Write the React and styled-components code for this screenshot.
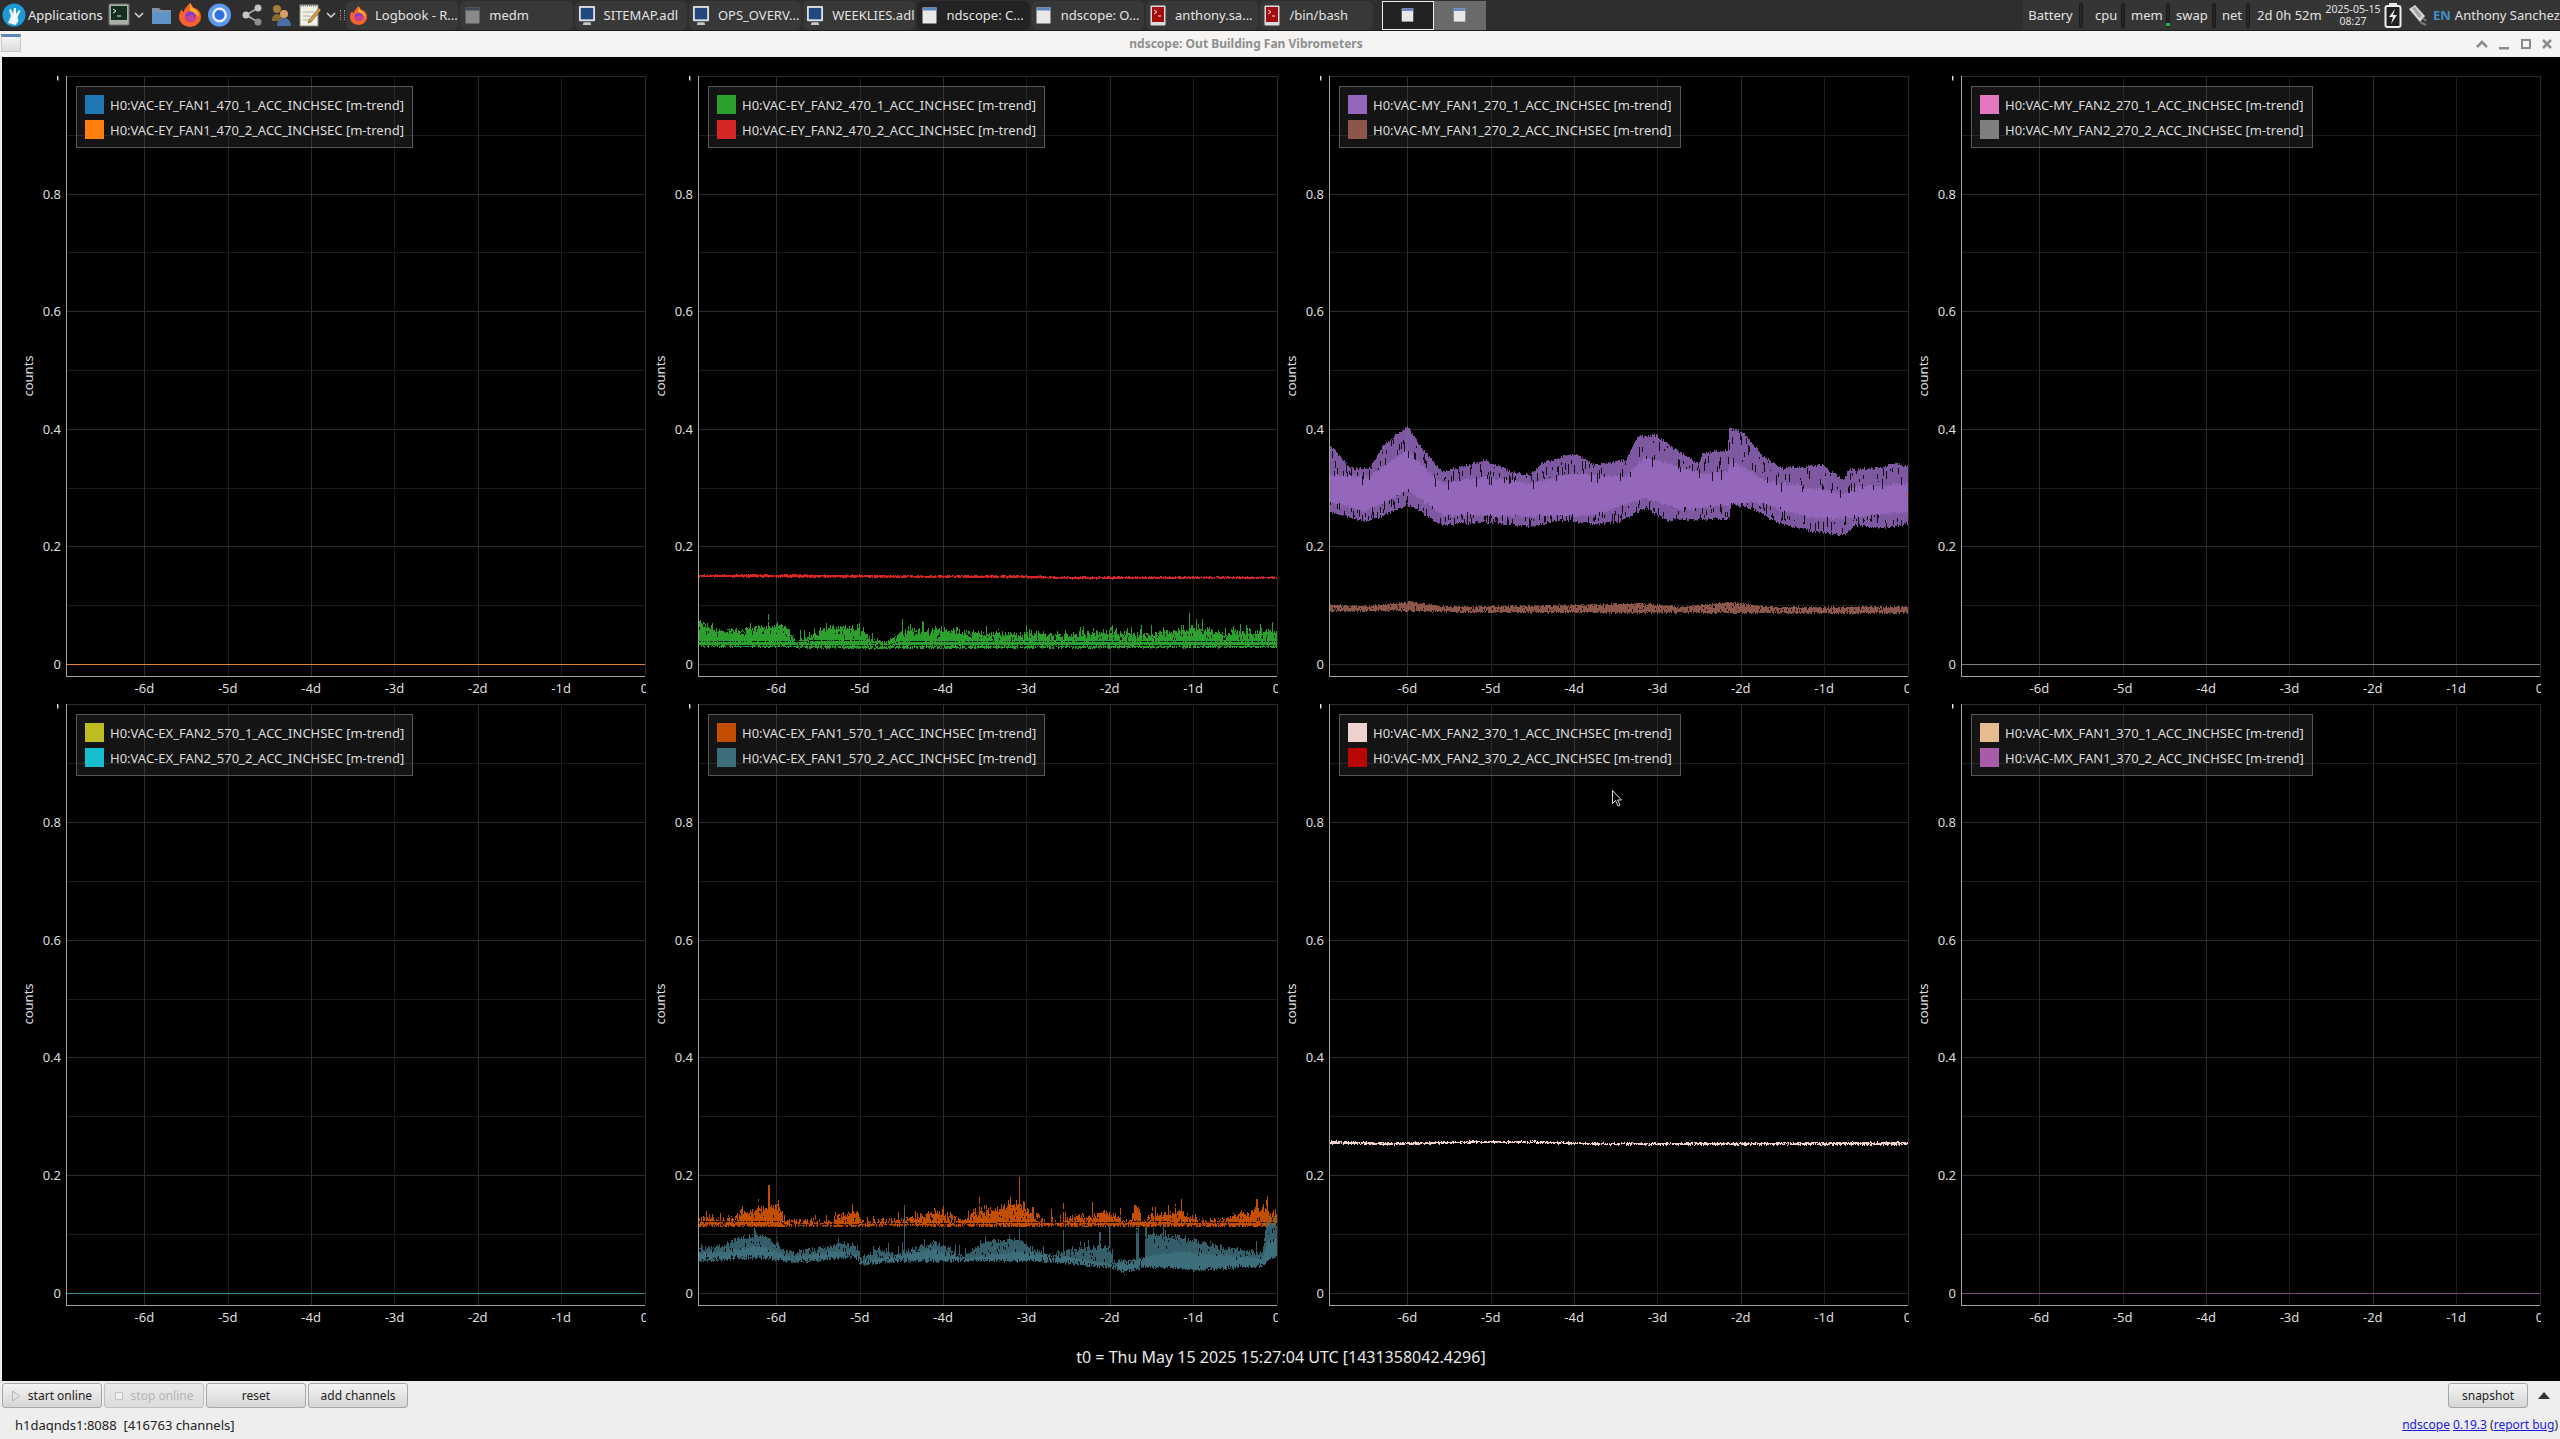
import { useMemo } from 'react'
import styled, { createGlobalStyle } from 'styled-components'

const GlobalStyle = createGlobalStyle`
	html, body {
		margin: 0;
		background: #eeeeee;
		font-family: 'Noto Sans', sans-serif;
	}
`

// plot geometry, local to one grid cell
const AXIS_X = 64
const PLOT_W = 579
const PLOT_TOP = 4
const ZERO_TO_BOTTOM = 12
const DAY_W = 83.35
const DAY0_X = AXIS_X + 78.4 + 6 * DAY_W

function rngFor(seed) {
	let a = seed
	return () => {
		a = (a + 0x6d2b79f5) | 0
		let t = Math.imul(a ^ (a >>> 15), 1 | a)
		t = (t + Math.imul(t ^ (t >>> 7), 61 | t)) ^ t
		return ((t ^ (t >>> 14)) >>> 0) / 4294967296
	}
}

// traces were read off zoomed crops: x is squeezed 2.613, y is 3x
const fromZoom = (pts, x0, yOff) =>
	pts.map(([x, y]) => [AXIS_X + (x - x0) / 2.613, yOff + y / 3])

function lerp(pts, x) {
	if (x <= pts[0][0]) return pts[0][1]
	for (let i = 1; i < pts.length; i++) {
		if (x <= pts[i][0]) {
			const [x0, y0] = pts[i - 1]
			const [x1, y1] = pts[i]
			return y0 + ((y1 - y0) * (x - x0)) / (x1 - x0)
		}
	}
	return pts[pts.length - 1][1]
}

function buildBand(trace) {
	const rng = rngFor(trace.seed)
	const { upper, lower, coreUpper, coreLower, rails = [], spikes = [] } = trace
	const { jitter = 1.5, topJitter = jitter, gapRate = 0.3, gapLen = 8, spikeRate = 0 } = trace
	let outer = ''
	let core = ''
	let gaps = ''
	for (let c = 0; c < PLOT_W; c++) {
		const x = AXIS_X + c
		let hi = lerp(upper, x) + (rng() - 0.5) * topJitter * 2
		const lo = lerp(lower, x) + (rng() - 0.5) * jitter * 2
		if (rng() < spikeRate) hi -= rng() * rng() * 14
		spikes.forEach(([sx, sy]) => {
			if (Math.abs(sx - x) < 0.8) hi = Math.min(hi, sy)
		})
		outer += `M${x + 0.5} ${hi.toFixed(1)}V${lo.toFixed(1)}`
		let cHi = lo
		let cLo = lo
		if (coreUpper) {
			cHi = lerp(coreUpper, x) + (rng() - 0.5) * jitter * 2
			cLo = coreLower ? lerp(coreLower, x) + (rng() - 0.5) * jitter * 2 : lo
			core += `M${x + 0.5} ${cHi.toFixed(1)}V${cLo.toFixed(1)}`
		}
		if (rng() < gapRate) {
			const y = hi + rng() * Math.max(cHi - hi, 1)
			gaps += `M${x + 0.5} ${y.toFixed(1)}v${(1 + rng() * gapLen).toFixed(1)}`
		}
		if (coreLower && rng() < gapRate) {
			const y = cLo + rng() * Math.max(lo - cLo - 2, 1) - 2
			gaps += `M${x + 0.5} ${y.toFixed(1)}v${(1 + rng() * gapLen).toFixed(1)}`
		}
		rails.forEach((rail) => {
			if (rng() < 0.65) gaps += `M${x + 0.5} ${lerp(rail, x).toFixed(1)}v1`
		})
	}
	return { outer, core, gaps }
}

const P = (pts) => fromZoom(pts, 25, 328)
const G = (pts) => fromZoom(pts, 46, 468)
const E = (pts) => fromZoom(pts, 46, 440)

const purple = {
	color: '#9467bd',
	seed: 11,
	jitter: 1.6,
	gapRate: 0.3,
	gapLen: 9,
	upper: P([[25, 135], [55, 170], [80, 205], [130, 205], [170, 130], [230, 80], [270, 150], [320, 215], [370, 200], [430, 180], [500, 215], [550, 225], [580, 190], [665, 160], [720, 195], [800, 180], [830, 110], [880, 105], [915, 140], [990, 190], [1000, 160], [1065, 150], [1070, 85], [1110, 100], [1160, 170], [1210, 205], [1310, 195], [1370, 240], [1380, 210], [1450, 205], [1510, 190], [1536, 200]]),
	lower: P([[25, 335], [120, 365], [170, 345], [230, 315], [320, 375], [430, 365], [550, 380], [620, 360], [720, 372], [780, 365], [850, 325], [905, 360], [1070, 355], [1075, 315], [1130, 325], [1200, 370], [1290, 395], [1370, 405], [1400, 375], [1480, 385], [1536, 370]]),
	coreUpper: P([[25, 225], [130, 230], [190, 180], [230, 150], [270, 200], [320, 250], [430, 230], [550, 250], [665, 220], [800, 230], [850, 170], [1000, 220], [1065, 215], [1075, 180], [1160, 240], [1370, 280], [1400, 260], [1536, 250]]),
	coreLower: P([[25, 305], [120, 335], [170, 310], [230, 270], [320, 345], [550, 350], [720, 345], [850, 295], [950, 330], [1070, 315], [1130, 305], [1290, 355], [1370, 355], [1536, 335]]),
}

const brown = {
	color: '#8c564b',
	seed: 12,
	jitter: 1,
	gapRate: 0.3,
	gapLen: 2,
	upper: P([[25, 615], [130, 618], [230, 605], [330, 620], [600, 617], [830, 610], [950, 620], [1070, 607], [1200, 622], [1536, 620]]),
	lower: P([[25, 635], [200, 632], [350, 637], [1536, 640]]),
}

const green = {
	color: '#2ca02c',
	seed: 21,
	jitter: 1,
	topJitter: 3,
	gapRate: 0.25,
	gapLen: 3,
	spikeRate: 0.3,
	solid: true,
	upper: G([[46, 245], [100, 275], [200, 265], [270, 255], [300, 305], [355, 285], [380, 265], [460, 265], [500, 300], [540, 310], [570, 280], [690, 268], [760, 280], [1000, 288], [1130, 278], [1200, 285], [1300, 272], [1360, 262], [1420, 282], [1560, 272]]),
	lower: G([[46, 320], [270, 320], [300, 323], [500, 326], [560, 325], [700, 325], [1560, 322]]),
	coreUpper: G([[46, 275], [270, 280], [300, 305], [460, 288], [510, 318], [570, 290], [1000, 295], [1560, 290]]),
	coreLower: G([[46, 320], [1560, 322]]),
	rails: [G([[46, 302], [270, 302], [480, 300], [530, 318], [570, 304], [1560, 304]]), G([[46, 314], [1560, 315]])],
}

const red = {
	color: '#d62728',
	seed: 22,
	jitter: 0.6,
	gapRate: 0.12,
	gapLen: 1,
	upper: G([[46, 105], [220, 103], [600, 106], [900, 106], [1000, 110], [1560, 110]]),
	lower: G([[46, 111], [600, 113], [900, 114], [1000, 117], [1560, 116]]),
}

const orange = {
	color: '#c44e00',
	seed: 31,
	jitter: 0.8,
	topJitter: 3.5,
	gapRate: 0.35,
	gapLen: 3,
	spikeRate: 0.3,
	solid: true,
	upper: E([[46, 238], [140, 240], [150, 218], [260, 198], [270, 242], [400, 246], [410, 230], [460, 212], [470, 246], [590, 242], [610, 230], [670, 212], [740, 246], [760, 226], [880, 190], [930, 230], [950, 246], [1000, 250], [1010, 235], [1130, 222], [1160, 246], [1180, 250], [1185, 205], [1200, 205], [1205, 255], [1220, 230], [1300, 216], [1380, 246], [1440, 230], [1530, 206], [1560, 228]]),
	lower: E([[46, 259], [1560, 259]]),
	coreUpper: E([[46, 245], [140, 245], [160, 228], [260, 228], [270, 247], [400, 248], [460, 238], [470, 248], [880, 238], [950, 248], [1560, 242]]),
	coreLower: E([[46, 259], [1560, 259]]),
	rails: [E([[150, 244], [260, 244], [270, 252], [1220, 244], [1560, 246]])],
	spikes: E([[230, 135], [885, 110], [780, 170], [1000, 188], [584, 195], [1075, 185], [1190, 198], [1505, 178]]),
}

const teal = {
	color: '#3c6e7c',
	seed: 32,
	jitter: 1.4,
	topJitter: 2.5,
	gapRate: 0.3,
	gapLen: 3,
	spikeRate: 0.15,
	upper: E([[46, 325], [100, 320], [150, 295], [210, 285], [290, 340], [360, 325], [430, 310], [465, 330], [470, 360], [510, 330], [560, 345], [660, 305], [740, 350], [800, 305], [880, 300], [950, 345], [1050, 325], [1120, 320], [1130, 365], [1190, 360], [1215, 355], [1220, 280], [1300, 290], [1400, 320], [1520, 340], [1530, 250], [1560, 250]]),
	lower: E([[46, 365], [200, 355], [300, 368], [460, 350], [470, 376], [560, 365], [700, 365], [900, 360], [1000, 370], [1130, 385], [1160, 400], [1200, 385], [1300, 380], [1340, 392], [1520, 380], [1535, 350], [1560, 350]]),
	coreUpper: E([[46, 340], [210, 320], [290, 352], [430, 330], [470, 365], [660, 328], [740, 355], [880, 335], [1000, 350], [1130, 375], [1220, 350], [1300, 335], [1520, 355], [1535, 300], [1560, 300]]),
	coreLower: E([[46, 360], [200, 350], [300, 365], [460, 345], [470, 372], [560, 362], [1000, 365], [1130, 382], [1160, 396], [1200, 382], [1340, 388], [1520, 376], [1560, 340]]),
	spikes: E([[584, 195], [1000, 270], [1190, 265], [1195, 265], [1095, 275], [1120, 255], [885, 268], [1215, 260]]),
}

const pink = {
	color: '#f3d1cd',
	seed: 41,
	jitter: 0.8,
	gapRate: 0.15,
	gapLen: 1,
	upper: [[64, 441], [130, 442.5], [210, 441], [270, 441], [330, 443], [640, 442], [1000, 441], [1500, 443]],
	lower: [[64, 444], [130, 445], [210, 443], [270, 443], [330, 445], [640, 445], [1000, 444], [1500, 445.5]],
}

const PLOTS = [
	{ ref: 'EY_FAN1_470', legend: ['#1f77b4', '#ff7f0e'], flat: '#e4812a' },
	{ ref: 'EY_FAN2_470', legend: ['#2ca02c', '#d62728'], bands: [green, red] },
	{ ref: 'MY_FAN1_270', legend: ['#9467bd', '#8c564b'], bands: [purple, brown], dot: true },
	{ ref: 'MY_FAN2_270', legend: ['#e377c2', '#7f7f7f'], flat: '#7f7f7f' },
	{ ref: 'EX_FAN2_570', legend: ['#bcbd22', '#17becf'], flat: '#2f8f96' },
	{ ref: 'EX_FAN1_570', legend: ['#c44e00', '#3c6e7c'], bands: [orange, teal] },
	{ ref: 'MX_FAN2_370', legend: ['#edd2cf', '#b80707'], bands: [pink] },
	{ ref: 'MX_FAN1_370', legend: ['#e6bb8f', '#a65ca6'], flat: '#7a4a7a' },
]

function Band({ trace }) {
	const { outer, core, gaps } = useMemo(() => buildBand(trace), [trace])
	return (
		<g shapeRendering='crispEdges'>
			<path d={outer} stroke={trace.color} strokeOpacity={trace.coreUpper && !trace.solid ? 0.85 : 1} />
			{core && <path d={core} stroke={trace.color} />}
			<path d={gaps} stroke='#000' strokeOpacity={0.85} />
		</g>
	)
}

function Plot({ ref: channel, legend, flat, bands, dot, zero }) {
	const valueY = (v) => zero - v * (zero - PLOT_TOP)
	const bottom = zero + ZERO_TO_BOTTOM
	const right = AXIS_X + PLOT_W
	const days = [6, 5, 4, 3, 2, 1, 0]
	const tenths = [1, 2, 3, 4, 5, 6, 7, 8, 9, 10]
	return (
		<Cell>
			<PlotSvg width='646' height='628'>
				{tenths.map((t) => (
					<GridLine
						key={t}
						$strong={t % 2 === 0}
						x1={AXIS_X}
						x2={right}
						y1={Math.round(valueY(t / 10)) + 0.5}
						y2={Math.round(valueY(t / 10)) + 0.5}
					/>
				))}
				<GridLine $strong x1={AXIS_X} x2={right} y1={zero + 0.5} y2={zero + 0.5} />
				{days.map((d) => (
					<GridLine
						key={d}
						$strong={d % 2 === 0}
						x1={Math.round(DAY0_X - d * DAY_W) + 0.5}
						x2={Math.round(DAY0_X - d * DAY_W) + 0.5}
						y1={PLOT_TOP}
						y2={bottom}
					/>
				))}
				{flat && <line x1={AXIS_X} x2={right} y1={zero + 0.5} y2={zero + 0.5} stroke={flat} />}
				{bands && bands.map((b) => <Band key={b.seed} trace={b} />)}
				{dot && <rect x={right - 2} y={422} width='2' height='1' fill='#e03030' />}
				<AxisLine x1={AXIS_X + 0.5} x2={AXIS_X + 0.5} y1={PLOT_TOP} y2={bottom + 1} />
				<AxisLine x1={AXIS_X} x2={right} y1={bottom + 0.5} y2={bottom + 0.5} />
				<rect x='55' y={PLOT_TOP} width='1.4' height='4.5' fill='#e6e6e6' />
				{[0, 0.2, 0.4, 0.6, 0.8].map((v) => (
					<text key={v} x='59' y={valueY(v) + 5} textAnchor='end'>
						{v}
					</text>
				))}
				<text transform={`translate(31 304) rotate(-90)`} textAnchor='middle'>
					counts
				</text>
				<svg x='0' y={bottom} width={right + 1} height='24'>
					{days.map((d) => (
						<text key={d} x={DAY0_X - d * DAY_W} y='17' textAnchor='middle'>
							{d === 0 ? '0' : `-${d}d`}
						</text>
					))}
				</svg>
			</PlotSvg>
			<Legend>
				{legend.map((color, i) => (
					<LegendRow key={color}>
						<Swatch $color={color} />
						H0:VAC-{channel}_{i + 1}_ACC_INCHSEC [m-trend]
					</LegendRow>
				))}
			</Legend>
		</Cell>
	)
}

/* ---- small drawn icons ---- */

function Logo() {
	return (
		<svg width='24' height='24' viewBox='0 0 24 24'>
			<circle cx='12' cy='12' r='11.5' fill='#1d9ad6' />
			<path d='M6 20 9 13 7 7l2-1 2 5 1-6 2 0 0 6 3-4 1.500 1-3 6 1 4-3 4z' fill='#f2f6f8' />
		</svg>
	)
}

function TerminalIcon() {
	return (
		<svg width='22' height='24' viewBox='0 0 22 24'>
			<rect x='1' y='1' width='20' height='21' rx='1' fill='#aab0a8' stroke='#6d716b' />
			<rect x='3' y='3' width='16' height='14' fill='#16301f' />
			<path d='M5 6l3 2-3 2M9 13h4' stroke='#e8f0e8' fill='none' />
		</svg>
	)
}

function FolderIcon() {
	return (
		<svg width='21' height='20' viewBox='0 0 21 20'>
			<path d='M1 3h7l2 2h10v14H1z' fill='#7e93a8' />
			<rect x='1' y='7' width='19' height='12' fill='#5f94c8' />
		</svg>
	)
}

function FirefoxIcon({ size = 22 }) {
	return (
		<svg width={size} height={size + 2} viewBox='0 0 24 26'>
			<path d='M12 0c2 2 3 4 4 5 5 1 8 5 8 10 0 6-5 11-12 11S0 21 0 15c0-3 1-6 3-8 0 1 1 2 2 3 1-4 4-7 7-10z' fill='#f9622a' />
			<path d='M12 0c2 3 1 5 4 6 3 2 6 5 6 9-3-4-7-4-10-4z' fill='#ffb51f' />
			<circle cx='12.500' cy='15' r='6' fill='#7c3bd0' />
			<path d='M6 14c3 1 7 0 8-2 3 1 4 4 3 7-3 3-9 3-11-5z' fill='#e1457c' opacity='.7' />
		</svg>
	)
}

function ChromiumIcon() {
	return (
		<svg width='23' height='24' viewBox='0 0 24 24'>
			<circle cx='12' cy='12' r='12' fill='#5f97f0' />
			<circle cx='12' cy='12' r='6.500' fill='#2f6fe0' stroke='#e9eff9' strokeWidth='2.500' />
		</svg>
	)
}

function ShareIcon() {
	return (
		<svg width='25' height='22' viewBox='-3 0 25 22'>
			<path d='M17 4 5 11l12 7' stroke='#b5b5b5' strokeWidth='1.500' fill='none' />
			<circle cx='17' cy='4' r='3.500' fill='#c4c4c4' />
			<circle cx='5' cy='11' r='3.500' fill='#c4c4c4' />
			<circle cx='17' cy='18' r='3.500' fill='#8e8e8e' />
		</svg>
	)
}

function UsersIcon() {
	return (
		<svg width='22' height='24' viewBox='0 0 22 24'>
			<circle cx='7' cy='6' r='4' fill='#a67c3c' />
			<path d='M2 18c0-5 2-7 5-7s5 2 5 7z' fill='#8a6a30' />
			<circle cx='14' cy='11' r='4' fill='#d9a066' />
			<path d='M7 23c0-5 3-8 7-8s7 3 7 8z' fill='#4a6fa5' />
		</svg>
	)
}

function NotepadIcon() {
	return (
		<svg width='23' height='24' viewBox='0 0 23 24'>
			<rect x='1' y='2' width='18' height='21' fill='#f2f0e4' stroke='#8c8c80' />
			<path d='M2 2.500h16' stroke='#777' strokeWidth='2' strokeDasharray='1 1' />
			<path d='M4 9h11M4 13h8M4 17h6' stroke='#b0b0a8' />
			<path d='M20 5 10 17l-1 3 3-1L22 7z' fill='#d8a040' stroke='#5a4520' strokeWidth='.6' />
		</svg>
	)
}

function WindowIcon({ dim, small }) {
	return (
		<svg width={small ? 13 : 15} height={small ? 14 : 17} viewBox='0 0 15 17'>
			<rect x='.5' y='.5' width='14' height='16' fill={dim ? '#8a8a8a' : '#e8e8e8'} />
			<rect x='.5' y='.5' width='14' height='3' fill={dim ? '#3e4a58' : '#5c86bb'} />
		</svg>
	)
}

function MonitorIcon() {
	return (
		<svg width='18' height='21' viewBox='0 0 19 22'>
			<rect x='1' y='1' width='17' height='16' rx='1' fill='#d8dce0' />
			<rect x='3' y='3' width='13' height='12' fill='#23487f' />
			<path d='M6 18h7l1 3H5z' fill='#c4c8cc' />
		</svg>
	)
}

function RedTerminalIcon() {
	return (
		<svg width='16' height='21' viewBox='0 0 16 21'>
			<rect x='.5' y='.5' width='15' height='20' rx='1' fill='#dcdcdc' />
			<rect x='2' y='2' width='12' height='15' fill='#a30d0d' />
			<path d='M4 5l3 2-3 2M8 11h3' stroke='#f3e2e2' fill='none' />
		</svg>
	)
}

const Chevron = () => (
	<ChevronSvg width='10' height='7' viewBox='0 0 10 7'>
		<path d='M1 1l4 4 4-4' stroke='#d8d8d8' strokeWidth='1.500' fill='none' />
	</ChevronSvg>
)

const TASKS = [
	{ title: 'Logbook - R...', icon: <FirefoxIcon size={17} /> },
	{ title: 'medm', icon: <WindowIcon dim /> },
	{ title: 'SITEMAP.adl', icon: <MonitorIcon /> },
	{ title: 'OPS_OVERV...', icon: <MonitorIcon /> },
	{ title: 'WEEKLIES.adl', icon: <MonitorIcon /> },
	{ title: 'ndscope: C...', icon: <WindowIcon />, active: true },
	{ title: 'ndscope: O...', icon: <WindowIcon /> },
	{ title: 'anthony.sa...', icon: <RedTerminalIcon /> },
	{ title: '/bin/bash', icon: <RedTerminalIcon /> },
]

const METERS = [
	{ label: 'Battery', width: 47 },
	{ label: 'cpu', width: 21, lead: 6 },
	{ label: 'mem', width: 30 },
	{ label: 'swap', width: 31 },
	{ label: 'net', width: 19 },
]

function App() {
	return (
		<Screen>
			<GlobalStyle />
			<TopBar>
				<Launchers>
					<Logo />
					<AppsLabel>Applications</AppsLabel>
					<TerminalIcon />
					<Chevron />
					<FolderIcon />
					<FirefoxIcon />
					<ChromiumIcon />
					<ShareIcon />
					<UsersIcon />
					<NotepadIcon />
					<Chevron />
					<Grip />
				</Launchers>
				<Tasks>
					{TASKS.map((t) => (
						<Task key={t.title} $active={t.active}>
							<TaskIcon>{t.icon}</TaskIcon>
							{t.title}
						</Task>
					))}
				</Tasks>
				<Pager>
					<Desk $current>
						<WindowIcon small />
					</Desk>
					<Desk>
						<WindowIcon small />
					</Desk>
				</Pager>
				<Spacer />
				<Tray>
					{METERS.map((m) => (
						<MeterGroup key={m.label}>
							<MeterLabel $width={m.width} $lead={m.lead}>
								{m.label}
							</MeterLabel>
							<Meter $used={m.label === 'mem'} />
						</MeterGroup>
					))}
					<Uptime>2d 0h 52m</Uptime>
					<Clock>
						<span>2025-05-15</span>
						<span>08:27</span>
					</Clock>
					<svg width='18' height='25' viewBox='0 0 18 25'>
						<rect x='5' y='0' width='8' height='3' fill='#e8e8e8' />
						<rect x='1.500' y='3' width='15' height='21' rx='2' fill='#222' stroke='#eee' strokeWidth='2' />
						<path d='M11 6 5 14h4l-2 7 6-9H9z' fill='#eee' />
					</svg>
					<PlugIcon width='19' height='22' viewBox='0 0 19 22'>
						<path d='M1 5l6-4 10 11-5 6z' fill='#d8d8d8' />
						<path d='M12 18l6 3M15 14l3 3' stroke='#777' strokeWidth='2' />
						<path d='M4 4l3-1 7 9-3 2z' fill='#a4a4a4' />
					</PlugIcon>
					<Lang>EN</Lang>
					<UserName>Anthony Sanchez</UserName>
				</Tray>
			</TopBar>

			<TitleBar>
				<AppIcon />
				<WindowTitle>ndscope: Out Building Fan Vibrometers</WindowTitle>
				<WindowButtons>
					<svg width='14' height='10' viewBox='0 0 14 10'>
						<path d='M2 8l5-5 5 5' stroke='#8c8c8c' strokeWidth='2.500' fill='none' />
					</svg>
					<svg width='12' height='12' viewBox='0 0 12 12'>
						<rect x='1' y='9' width='10' height='2.500' fill='#8c8c8c' />
					</svg>
					<svg width='12' height='12' viewBox='0 0 12 12'>
						<rect x='2' y='2' width='8' height='8' stroke='#8c8c8c' strokeWidth='2' fill='none' />
					</svg>
					<svg width='12' height='12' viewBox='0 0 12 12'>
						<path d='M2 2l8 8M10 2l-8 8' stroke='#8c8c8c' strokeWidth='2.500' />
					</svg>
				</WindowButtons>
			</TitleBar>

			<Scope>
				<PlotGrid>
					{PLOTS.map((p, i) => (
						<Plot key={p.ref} {...p} zero={i < 4 ? 592 : 593} />
					))}
				</PlotGrid>
				<TimeLabel>t0 = Thu May 15 2025 15:27:04 UTC [1431358042.4296]</TimeLabel>
				<Cursor width='11' height='17' viewBox='0 0 11 17'>
					<path d='M.5.5v13l3-3 2.500 5.500 2-1-2.500-5h4z' fill='#000' stroke='#ddd' />
				</Cursor>
			</Scope>

			<ControlBar>
				<PushButton>
					<svg width='8' height='12' viewBox='0 0 8 12'>
						<path d='M.5 1l7 5-7 5z' fill='#e4e4e4' stroke='#b4b4b4' />
					</svg>
					start online
				</PushButton>
				<PushButton disabled>
					<svg width='8' height='8' viewBox='0 0 8 8'>
						<rect x='.5' y='.5' width='7' height='7' fill='#eee' stroke='#c4c4c4' />
					</svg>
					stop online
				</PushButton>
				<PushButton>reset</PushButton>
				<PushButton>add channels</PushButton>
				<Spacer />
				<SnapshotButton>snapshot</SnapshotButton>
				<Collapse />
			</ControlBar>

			<StatusBar>
				<span>h1daqnds1:8088&nbsp;&nbsp;[416763 channels]</span>
				<StatusLinks>
					<StatusLink>ndscope</StatusLink> <StatusLink>0.19.3</StatusLink> (<StatusLink>report bug</StatusLink>)
				</StatusLinks>
			</StatusBar>
		</Screen>
	)
}

export default App

const Screen = styled.div`
	width: 2560px;
	height: 1439px;
	display: flex;
	flex-direction: column;
	overflow: hidden;
	background: #eeeeee;
`

const TopBar = styled.header`
	height: 30px;
	flex: none;
	display: flex;
	align-items: center;
	background: #2e2e2e;
	border-bottom: 1px solid #1c1c1c;
	color: #e2e2e2;
	font-size: 13px;
`

const Launchers = styled.div`
	width: 346px;
	flex: none;
	box-sizing: border-box;
	padding-left: 2px;
	display: flex;
	align-items: center;
	gap: 7px;
`

const ChevronSvg = styled.svg`
	margin-left: -3px;
`

const AppsLabel = styled.span`
	width: 74px;
	margin: 0 -1px 0 -5px;
	color: #e8e8e8;
`

const Grip = styled.span`
	width: 3px;
	height: 10px;
	margin-left: -3px;
	border-left: 1px dotted #999;
	border-right: 1px dotted #999;
`

const Tasks = styled.div`
	display: flex;
	gap: 2px;
`

const Task = styled.div`
	width: 112.3px;
	height: 29px;
	box-sizing: border-box;
	padding-left: 3px;
	display: flex;
	align-items: center;
	gap: 8px;
	border-radius: 6px;
	background: ${({ $active }) => ($active ? '#232323' : '#383838')};
	white-space: nowrap;
	overflow: hidden;
`

const TaskIcon = styled.span`
	width: 18px;
	flex: none;
	display: flex;
	justify-content: center;
`

const Pager = styled.div`
	margin-left: 9px;
	display: flex;
	height: 29px;
	box-sizing: border-box;
`

const Desk = styled.div`
	width: 52px;
	display: flex;
	align-items: center;
	justify-content: center;
	box-sizing: border-box;
	background: ${({ $current }) => ($current ? '#222222' : '#6a6a6a')};
	border: ${({ $current }) => ($current ? '1px solid #eeeeee' : 'none')};
`

const Spacer = styled.div`
	flex: 1;
`

const Tray = styled.div`
	width: 537px;
	height: 30px;
	box-sizing: border-box;
	padding-left: 4px;
	display: flex;
	align-items: center;
	background: #353535;
	white-space: nowrap;

	svg {
		flex: none;
	}
`

const MeterGroup = styled.div`
	display: flex;
	align-items: center;
`

const MeterLabel = styled.span`
	width: ${({ $width }) => $width}px;
	margin-left: ${({ $lead }) => $lead || 0}px;
	text-align: center;
`

const Meter = styled.span`
	width: 4px;
	height: 25px;
	margin: 0 6px 0 5px;
	border-radius: 2px;
	background: #262626;
	border: 1px solid #1a1a1a;
	box-sizing: border-box;
	position: relative;

	&::after {
		content: '';
		display: ${({ $used }) => ($used ? 'block' : 'none')};
		position: absolute;
		left: -1px;
		right: -1px;
		bottom: 1px;
		height: 3px;
		background: #1fb45c;
	}
`

const Uptime = styled.span`
	width: 65px;
	margin: 0 4px 0 1px;
`

const Clock = styled.div`
	width: 54px;
	margin-right: 4px;
	display: flex;
	flex-direction: column;
	align-items: center;
	font-size: 10.5px;
	line-height: 12px;
`

const PlugIcon = styled.svg`
	margin-left: 6px;
`

const Lang = styled.span`
	margin-left: 6px;
	color: #3f8fcd;
	font-weight: 700;
`

const UserName = styled.span`
	margin-left: 4px;
`

const TitleBar = styled.div`
	height: 25px;
	flex: none;
	display: flex;
	align-items: center;
	background: #f5f4f2;
	border-bottom: 1px solid #eeeeec;
`

const AppIcon = styled.div`
	width: 20px;
	height: 18px;
	margin: -1px 1px 0 1px;
	box-sizing: border-box;
	border: 1px solid #c8c8c8;
	border-top: 3px solid #5c86bb;
	background: linear-gradient(#f4f4f4, #dcdcdc);
`

const WindowTitle = styled.div`
	flex: 1;
	text-align: center;
	color: #8f8f8f;
	font-size: 12px;
	font-weight: 700;
`

const WindowButtons = styled.div`
	width: 90px;
	display: flex;
	align-items: center;
	justify-content: space-around;
	padding-right: 2px;
	box-sizing: border-box;
`

const Scope = styled.main`
	height: 1324px;
	flex: none;
	margin-left: 2px;
	padding-top: 15px;
	box-sizing: border-box;
	background: #000000;
	position: relative;
`

const PlotGrid = styled.div`
	display: grid;
	grid-template-columns: 632px 631px 632px 631px;
	grid-template-rows: repeat(2, 628px);
`

const Cell = styled.section`
	position: relative;
`

const PlotSvg = styled.svg`
	display: block;
	overflow: visible;

	text {
		fill: #dddddd;
		font-family: 'Noto Sans', sans-serif;
		font-size: 13px;
	}
`

const GridLine = styled.line`
	stroke: ${({ $strong }) => ($strong ? '#2b2b2b' : '#1c1c1c')};
	shape-rendering: crispEdges;
`

const AxisLine = styled.line`
	stroke: #a4a4a4;
	shape-rendering: crispEdges;
`

const Legend = styled.div`
	position: absolute;
	left: 74px;
	top: 14px;
	padding: 8px 8px 8px 8px;
	display: flex;
	flex-direction: column;
	gap: 6px;
	background: rgba(100, 100, 100, 0.2);
	border: 1px solid #555555;
	color: #dcdcdc;
	font-size: 13px;
`

const LegendRow = styled.div`
	height: 19px;
	display: flex;
	align-items: center;
	gap: 6px;
	white-space: nowrap;
`

const Swatch = styled.span`
	width: 19px;
	height: 19px;
	background: ${({ $color }) => $color};
`

const TimeLabel = styled.div`
	height: 52px;
	padding-top: 3px;
	display: flex;
	align-items: center;
	justify-content: center;
	color: #e8e8e8;
	font-size: 16px;
`

const Cursor = styled.svg`
	position: absolute;
	left: 1610px;
	top: 733px;
`

const ControlBar = styled.div`
	height: 29px;
	flex: none;
	box-sizing: border-box;
	padding: 2px 10px 2px 2px;
	display: flex;
	align-items: flex-start;
	gap: 2px;
`

const PushButton = styled.button`
	width: 100px;
	height: 25px;
	padding: 0;
	display: flex;
	align-items: center;
	justify-content: center;
	gap: 8px;
	border: 1px solid #a6a6a6;
	border-radius: 3px;
	background: linear-gradient(#f4f4f4, #d6d6d6);
	color: #1e1e1e;
	font-family: 'Noto Sans', sans-serif;
	font-size: 12px;

	&:disabled {
		color: #b4b4b4;
		border-color: #c0c0c0;
		background: linear-gradient(#eaeaea, #dcdcdc);
	}
`

const SnapshotButton = styled(PushButton)`
	width: 80px;
`

const Collapse = styled.span`
	margin: 9px 0 0 8px;
	width: 0;
	height: 0;
	border-left: 6px solid transparent;
	border-right: 6px solid transparent;
	border-bottom: 7px solid #333333;
`

const StatusBar = styled.footer`
	flex: 1;
	padding: 0 2px 0 15px;
	display: flex;
	align-items: center;
	justify-content: space-between;
	color: #222222;
	font-size: 13px;
	white-space: nowrap;
`

const StatusLinks = styled.span`
	font-size: 12px;
`

const StatusLink = styled.span`
	color: #1a1ae0;
	text-decoration: underline;
`
